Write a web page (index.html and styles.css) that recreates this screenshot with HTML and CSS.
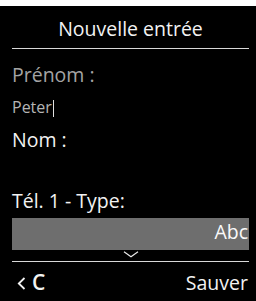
FILE: index.html
```html
<!DOCTYPE html>
<html lang="fr">
<head>
<meta charset="utf-8">
<title>Nouvelle entrée</title>
<link rel="stylesheet" href="styles.css">
</head>
<body>
<div class="screen">
  <header class="header">Nouvelle entrée</header>
  <main class="form">
    <div class="row label dim first">Prénom :</div>
    <div class="row value">Peter<span class="cursor"></span></div>
    <div class="row label nom">Nom :</div>
    <div class="row empty"></div>
    <div class="row label">Tél. 1 - Type:</div>
    <div class="select">Abc</div>
    <div class="more">
      <svg width="16" height="7" viewBox="0 0 16 7" aria-hidden="true"><path d="M1 0.8 L8 5.8 L15 0.8" fill="none" stroke="#e8e8e8" stroke-width="1.2"/></svg>
    </div>
  </main>
  <footer class="softkeys">
    <span class="back"><svg class="arrow" width="9" height="13" viewBox="0 0 9 13" aria-hidden="true"><path d="M7.5 1 L1.8 6.5 L7.5 12" fill="none" stroke="#f2f2f2" stroke-width="1.8"/></svg><span class="c">C</span></span>
    <span class="save">Sauver</span>
  </footer>
</div>
</body>
</html>
```
FILE: styles.css
```css
html {
  background: #fff;
}
body {
  margin: 0;
  font-family: "Open Sans", "Noto Sans", sans-serif;
}
.screen {
  margin-top: 6px;
  height: 295px;
  background: #000;
  color: #f2f2f2;
  padding: 0 7px 0 12px;
  display: flex;
  flex-direction: column;
}
.header {
  height: 39px;
  padding-top: 3px;
  line-height: 39px;
  font-size: 19.5px;
  text-align: center;
  border-bottom: 1px solid #d8d8d8;
}
.form {
  display: flex;
  flex-direction: column;
  border-bottom: 1px solid #d8d8d8;
}
.row {
  font-size: 19.5px;
  line-height: 31px;
  height: 31px;
  white-space: nowrap;
}
.first {
  margin-top: 10px;
}
.dim {
  color: #a4a4a4;
}
.value {
  font-size: 16px;
  line-height: 34px;
  height: 34px;
  color: #b4b4b4;
}
.cursor {
  display: inline-block;
  width: 1px;
  height: 17px;
  background: #e0e0e0;
  vertical-align: -4px;
  margin-left: 1px;
}
.empty {
  height: 30px;
}
.select {
  margin-top: 2px;
  height: 32px;
  line-height: 28px;
  font-size: 19.5px;
  background: #6e6e6e;
  color: #fafafa;
  text-align: right;
  padding-right: 1px;
}
.more {
  height: 11px;
  display: flex;
  justify-content: center;
  padding-top: 1px;
  box-sizing: border-box;
}
.softkeys {
  display: flex;
  justify-content: space-between;
  padding-top: 5px;
  line-height: 31px;
  font-size: 19.5px;
  padding-right: 1px;
}
.back {
  padding-left: 5px;
  display: flex;
  align-items: center;
  gap: 6px;
}
.arrow {
  display: block;
  margin-top: 1px;
}
.c {
  font-weight: 600;
  font-size: 21px;
}
```
